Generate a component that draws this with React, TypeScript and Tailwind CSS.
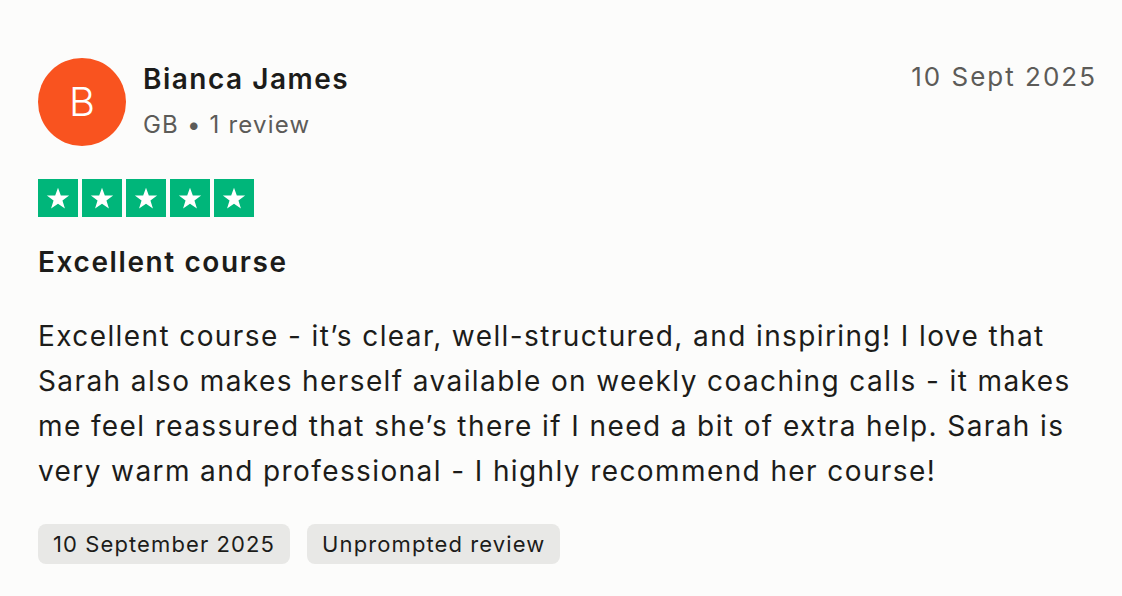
const Star = () => (
  <svg viewBox="0 0 24 24" className="w-[26px] h-[26px]" fill="#ffffff">
    <path d="M12 2.5l2.6 7.3h7.7l-6.2 4.6 2.3 7.4L12 17.3l-6.4 4.5 2.3-7.4-6.2-4.6h7.7z" />
  </svg>
);

const App = () => {
  return (
    <div className="min-h-screen w-[1122px] bg-[#fcfcfb] pl-[38px] pr-[25px] pt-[58px] font-['Inter',sans-serif] text-[#1c1c1a]">
      <div className="flex items-start justify-between">
        <div className="flex items-start gap-[17px]">
          <div className="flex h-[88px] w-[88px] items-center justify-center rounded-full bg-[#f9531f] text-[40px] font-light text-white">
            B
          </div>
          <div className="mt-[1px] flex flex-col">
            <span className="text-[28px] font-semibold leading-[40px] tracking-[1.5px]">Bianca James</span>
            <span className="mt-[10px] text-[24px] leading-[32px] tracking-[1.2px] text-[#5c5b58]">GB • 1 review</span>
          </div>
        </div>
        <span className="mt-[1px] text-[26px] leading-[36px] tracking-[2px] text-[#5c5b58]">10 Sept 2025</span>
      </div>

      <div className="mt-[33px] flex gap-[4px]">
        {[0, 1, 2, 3, 4].map((i) => (
          <div key={i} className="flex h-[38px] w-[40px] items-center justify-center bg-[#00b67a]">
            <Star />
          </div>
        ))}
      </div>

      <h2 className="mt-[25px] text-[28px] font-semibold leading-[40px] tracking-[1.6px]">Excellent course</h2>

      <p className="mt-[32px] w-[1050px] text-[28px] leading-[45px] tracking-[1.4px]">
        Excellent course - it’s clear, well-structured, and inspiring! I love that Sarah also makes herself available on weekly coaching calls - it makes me feel reassured that she’s there if I need a bit of extra help. Sarah is very warm and professional - I highly recommend her course!
      </p>

      <div className="mt-[30px] flex gap-[17px]">
        <span className="flex h-[40px] items-center rounded-[8px] bg-[#e8e8e6] px-[15px] text-[22px] tracking-[1.1px]">10 September 2025</span>
        <span className="flex h-[40px] items-center rounded-[8px] bg-[#e8e8e6] px-[15px] text-[22px] tracking-[1.1px]">Unprompted review</span>
      </div>
    </div>
  );
};

export default App;
